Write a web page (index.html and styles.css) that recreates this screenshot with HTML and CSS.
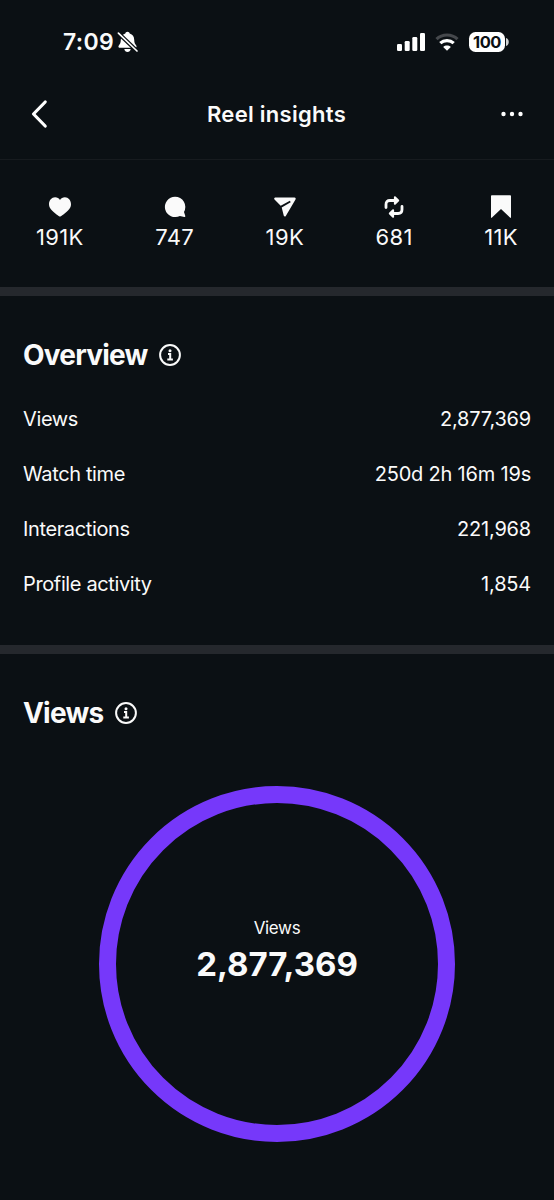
FILE: index.html
```html
<!DOCTYPE html>
<html lang="en">
<head>
<meta charset="utf-8">
<title>Reel insights</title>
<link rel="stylesheet" href="styles.css">
</head>
<body>
<div class="status">
  <span class="time">7:09</span>
  <svg class="bell" width="22" height="22" viewBox="0 0 22 22">
    <path d="M10.500 .8C9.300 .8 8.500 1.600 8.300 2.600C5.300 3.500 3.900 5.700 3.800 8.700C3.700 12 3.100 12.800 1.800 14.400C1 15.400 1.500 16.800 2.900 16.800H18.100C19.500 16.800 20 15.400 19.200 14.400C17.900 12.800 17.300 12 17.200 8.700C17.100 5.700 15.700 3.500 12.700 2.600C12.500 1.600 11.700 .8 10.500 .8Z" fill="#fff"/>
    <path d="M7.300 18H13.700C13.400 19.900 12.100 21 10.500 21S7.600 19.900 7.300 18Z" fill="#fff"/>
    <path d="M1.400 2.200L20 20" stroke="#0b1014" stroke-width="4"/>
    <path d="M1.400 2.200L20 20" stroke="#fff" stroke-width="1.700" stroke-linecap="round"/>
  </svg>
  <svg class="signal" width="28" height="18" viewBox="0 0 28 18" fill="#fff">
    <rect x="0" y="11" width="5" height="7" rx="1.300"/>
    <rect x="7.700" y="8" width="5" height="10" rx="1.300"/>
    <rect x="15.300" y="4" width="5" height="14" rx="1.300"/>
    <rect x="23" y="0" width="5" height="18" rx="1.300"/>
  </svg>
  <svg class="wifi" width="24" height="18" viewBox="0 0 24 18">
    <path d="M1.500 6.200C7.300 .6 16.700 .6 22.500 6.200" fill="none" stroke="#45484c" stroke-width="3.200"/>
    <path d="M5.300 10.200C9 6.700 15 6.700 18.700 10.200" fill="none" stroke="#fff" stroke-width="3.200"/>
    <path d="M12 17.700L8.200 13.900C10.300 12.100 13.700 12.100 15.800 13.900Z" fill="#fff"/>
  </svg>
  <div class="battery"><span class="level">100</span><svg width="3" height="8" viewBox="0 0 3 8"><path d="M0 0C3.700 1 3.700 7 0 8Z" fill="#d0d2d3"/></svg></div>
</div>
<header class="header">
  <svg width="18" height="30" viewBox="0 0 18 30"><path d="M15.200 3L3.500 15L15.200 27" fill="none" stroke="#fff" stroke-width="3.200" stroke-linecap="round" stroke-linejoin="round"/></svg>
  <h1 class="title">Reel insights</h1>
  <svg width="22" height="6" viewBox="0 0 22 6" fill="#fff"><circle cx="2.500" cy="3" r="2.200"/><circle cx="11" cy="3" r="2.200"/><circle cx="19.500" cy="3" r="2.200"/></svg>
</header>
<section class="stats">
  <div class="stat">
    <svg width="24" height="24" viewBox="0 0 24 24"><path d="M12 21.600C11 21.600 6.500 17.800 4 15.500C2 13.600 1 11.700 1 9.200C1 5.300 3.700 2.300 7.100 2.300C9.200 2.300 11 3.300 12 4.900C13 3.300 14.800 2.300 16.900 2.300C20.300 2.300 23 5.300 23 9.200C23 11.700 22 13.600 20 15.500C17.500 17.800 13 21.600 12 21.600Z" fill="#fafafa"/></svg>
    <span>191K</span>
  </div>
  <div class="stat">
    <svg width="24" height="24" viewBox="0 0 24 24"><path d="M12 1.700A10.200 10.200 0 1 0 16.900 20.900L21.300 22C22 22.200 22.500 21.700 22.300 21L21 16.900A10.200 10.200 0 0 0 12 1.700Z" fill="#fafafa"/></svg>
    <span>747</span>
  </div>
  <div class="stat">
    <svg width="24" height="24" viewBox="0 0 24 24"><path d="M2.300 2.500H21.500C22.500 2.500 23 3.500 22.500 4.400L12.800 20.900C12.300 21.800 11.100 21.600 10.800 20.700L8.700 12.500L17.700 7.200L16.900 5.800L7.700 10.700L1.500 4.400C.8 3.700 1.300 2.500 2.300 2.500Z" fill="#fafafa"/></svg>
    <span>19K</span>
  </div>
  <div class="stat">
    <svg width="24" height="24" viewBox="0 0 24 24" fill="none" stroke="#fafafa" stroke-width="2.800" stroke-linecap="round" stroke-linejoin="round"><path d="M4 12.600V9.400C4 6.900 5.400 5.500 7.900 5.500H14"/><path d="M12.900 2.200L16.200 5.500L12.900 8.800Z" fill="#fafafa" stroke-width="2"/><path d="M20 11.400V14.600C20 17.100 18.600 18.500 16.100 18.500H10"/><path d="M11.100 15.200L7.800 18.500L11.100 21.800Z" fill="#fafafa" stroke-width="2"/></svg>
    <span>681</span>
  </div>
  <div class="stat">
    <svg width="24" height="24" viewBox="0 0 24 24"><path d="M2.800 .2H21.200Q22 .2 22 1V22.100Q22 23.600 21 22.600L12 14L3 22.600Q2 23.600 2 22.100V1Q2 .2 2.800 .2Z" fill="#fafafa"/></svg>
    <span>11K</span>
  </div>
</section>
<section class="overview">
  <div class="heading">
    <h2>Overview</h2>
    <svg class="info" width="24" height="24" viewBox="0 0 24 24"><circle cx="12" cy="12" r="9.900" fill="none" stroke="#fafafa" stroke-width="2"/><circle cx="12" cy="7.800" r="1.500" fill="#fafafa"/><path d="M10 11H12.200V16.300M9.300 16.500H14.900" fill="none" stroke="#fafafa" stroke-width="2"/></svg>
  </div>
  <dl class="rows">
    <div class="row"><dt>Views</dt><dd>2,877,369</dd></div>
    <div class="row"><dt>Watch time</dt><dd>250d 2h 16m 19s</dd></div>
    <div class="row"><dt>Interactions</dt><dd>221,968</dd></div>
    <div class="row"><dt>Profile activity</dt><dd>1,854</dd></div>
  </dl>
</section>
<section class="views">
  <div class="heading">
    <h2>Views</h2>
    <svg class="info" width="24" height="24" viewBox="0 0 24 24"><circle cx="12" cy="12" r="9.900" fill="none" stroke="#fafafa" stroke-width="2"/><circle cx="12" cy="7.800" r="1.500" fill="#fafafa"/><path d="M10 11H12.200V16.300M9.300 16.500H14.900" fill="none" stroke="#fafafa" stroke-width="2"/></svg>
  </div>
  <div class="ring">
    <span class="ring-label">Views</span>
    <strong class="ring-value">2,877,369</strong>
  </div>
</section>
</body>
</html>
```
FILE: styles.css
```css
* { box-sizing: border-box; margin: 0; padding: 0; }
body {
  width: 554px;
  height: 1200px;
  overflow: hidden;
  background: #0b1014;
  color: #fafafa;
  font-family: Inter, "Liberation Sans", sans-serif;
}
svg { display: block; flex: none; }
.status {
  display: flex;
  align-items: center;
  height: 70px;
  padding: 13px 45px 0 63px;
}
.time { width: 54px; font-size: 23px; font-weight: 600; line-height: 28px; letter-spacing: 0.300px; }
.signal { margin-left: auto; }
.wifi { margin-left: 10px; }
.battery { display: flex; align-items: center; gap: 1px; margin-left: 10px; }
.level {
  width: 36px;
  height: 20px;
  border-radius: 6.500px;
  background: #fff;
  color: #0b1014;
  font-size: 16.500px;
  font-weight: 700;
  line-height: 20px;
  letter-spacing: -0.500px;
  text-align: center;
}
.header {
  display: flex;
  align-items: center;
  justify-content: space-between;
  height: 90px;
  padding: 0 31px 2px 30px;
  border-bottom: 1px solid #171b1f;
}
.title { padding-left: 4px; font-size: 22px; font-weight: 600; line-height: 28px; letter-spacing: 0.280px; }
.stats {
  display: flex;
  justify-content: space-between;
  height: 136px;
  padding: 35px 36px 0;
  border-bottom: 9px solid #25282d;
}
.stat {
  display: flex;
  flex-direction: column;
  align-items: center;
  gap: 4px;
  font-size: 22px;
  line-height: 28px;
  letter-spacing: 0.350px;
}
.overview {
  height: 358px;
  padding: 39px 23px 0;
  border-bottom: 9px solid #25282d;
}
.heading { display: flex; align-items: center; gap: 11px; height: 40px; }
.heading h2 { font-size: 28px; font-weight: 700; line-height: 40px; letter-spacing: -0.800px; }
.rows { padding-top: 16px; }
.row {
  display: flex;
  align-items: center;
  justify-content: space-between;
  height: 55px;
  font-size: 20px;
}
.row dt { letter-spacing: -0.370px; }
.row dd { letter-spacing: -0.200px; }
.views { padding: 39px 23px 0; }
.ring {
  display: flex;
  flex-direction: column;
  align-items: center;
  width: 356px;
  height: 356px;
  margin: 52.500px auto 0;
  padding-top: 113px;
  border: 17.500px solid #7638fa;
  border-radius: 50%;
}
.ring-label { font-size: 17px; line-height: 24px; letter-spacing: -0.350px; }
.ring-value { font-size: 33px; font-weight: 700; line-height: 48px; }
```
